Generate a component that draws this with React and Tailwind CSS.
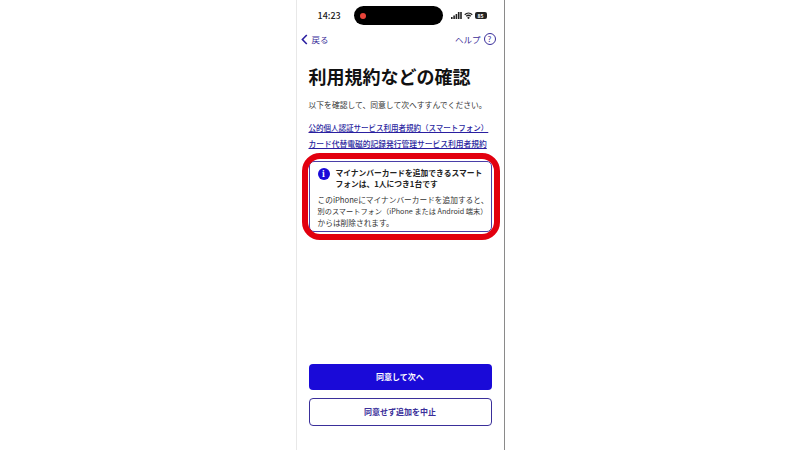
import React from "react";

const font = "font-['Noto_Sans_CJK_JP','Liberation_Sans',sans-serif]";

function StatusBar() {
  return (
    <div className="flex h-[31px] items-center pl-[21px] pr-[17px]">
      <span className="w-[36px] text-[9px] font-medium text-[#222]">14:23</span>
      <div className="flex h-[19px] w-[89px] items-center rounded-full bg-black pl-[6px]">
        <span className="h-[6px] w-[6px] rounded-full bg-[#e8443a]" />
      </div>
      <div className="ml-auto flex items-center gap-[2px]">
        <svg width="11" height="7" viewBox="0 0 11 7" fill="#222">
          <rect x="0" y="5" width="1.6" height="2" />
          <rect x="2.3" y="3.5" width="1.6" height="3.5" />
          <rect x="4.6" y="2" width="1.6" height="5" />
          <rect x="6.9" y="0" width="1.6" height="7" />
          <rect x="9.2" y="0" width="1.6" height="7" />
        </svg>
        <svg width="9" height="7" viewBox="0 0 12 9" fill="none" stroke="#222" strokeWidth="1.7">
          <path d="M1 3.4c2.8-2.6 7.2-2.6 10 0" />
          <path d="M3 5.5c1.7-1.5 4.3-1.5 6 0" />
          <circle cx="6" cy="7.6" r="0.6" fill="#222" />
        </svg>
        <span className="flex h-[7px] w-[12px] items-center justify-center rounded-[2px] bg-[#222] text-[5px] font-bold leading-none text-white">
          85
        </span>
      </div>
    </div>
  );
}

function Header() {
  return (
    <div className="mt-[1px] flex h-[14px] items-center justify-between pl-[4px] pr-[8px] text-[8.5px] text-[#3a2f9a]">
      <div className="flex items-center gap-[4px]">
        <svg width="7" height="11" viewBox="0 0 7 11" fill="none" stroke="#2a1fa0" strokeWidth="1.6">
          <path d="M5.8 1 1.4 5.5l4.4 4.5" />
        </svg>
        <span>戻る</span>
      </div>
      <div className="flex items-center gap-[3px]">
        <span>ヘルプ</span>
        <span className="flex h-[12px] w-[12px] items-center justify-center rounded-full border border-[#3a2f9a] text-[8px] leading-none">
          ?
        </span>
      </div>
    </div>
  );
}

export default function App() {
  return (
    <div className={`flex h-[450px] w-[800px] justify-center overflow-hidden bg-white ${font}`}>
      <div className="relative flex h-full w-[209px] flex-col border-l border-r border-l-[#e8e8e8] border-r-[#8a8a8a] bg-white">
        <StatusBar />
        <Header />

        <div className="flex flex-1 flex-col px-[12px]">
          <h1 className="mt-[19px] text-[18px] font-bold leading-[22px] text-[#111]">
            利用規約などの確認
          </h1>
          <p className="mt-[12px] whitespace-nowrap text-[7.8px] leading-[12px] text-[#333]">
            以下を確認して、同意して次へすすんでください。
          </p>

          <a className="mt-[11px] whitespace-nowrap text-[7.5px] font-medium leading-[12px] text-[#2a1fa0] underline">
            公的個人認証サービス利用者規約（スマートフォン）
          </a>
          <a className="mt-[4px] whitespace-nowrap text-[7.75px] font-medium leading-[12px] text-[#2a1fa0] underline">
            カード代替電磁的記録発行管理サービス利用者規約
          </a>

          <div className="relative mt-[11px] h-[71px] rounded-[5px] border border-[#4a3fa8] pl-[8px] pt-[5px]">
            <div className="flex gap-[6px]">
              <span className="mt-[1px] flex h-[12px] w-[12px] shrink-0 items-center justify-center rounded-full bg-[#1a0ad8] font-serif text-[9px] font-bold leading-none text-white">
                i
              </span>
              <p className="whitespace-nowrap text-[7.75px] font-bold leading-[11px] text-[#222]">
                マイナンバーカードを追加できるスマート
                <br />
                フォンは、1人につき1台です
              </p>
            </div>
            <p className="mt-[5px] whitespace-nowrap text-[7.7px] leading-[11px] text-[#333]">
              このiPhoneにマイナンバーカードを追加すると、
              <br />
              <span className="text-[7.2px]">別のスマートフォン（iPhone または Android 端末）</span>
              <br />
              からは削除されます。
            </p>
            <div className="pointer-events-none absolute -bottom-[9px] -left-[8px] -right-[9px] -top-[9px] rounded-[18px] border-[6.5px] border-[#e2000f]" />
          </div>

          <div className="mt-auto flex flex-col gap-[8px] pb-[24px]">
            <button className="h-[26px] rounded-[4px] bg-[#1a0ad8] text-[8px] font-bold text-white">
              同意して次へ
            </button>
            <button className="h-[28px] rounded-[4px] border border-[#3a2f9a] bg-white text-[8px] font-bold text-[#3a2f9a]">
              同意せず追加を中止
            </button>
          </div>
        </div>
      </div>
    </div>
  );
}
